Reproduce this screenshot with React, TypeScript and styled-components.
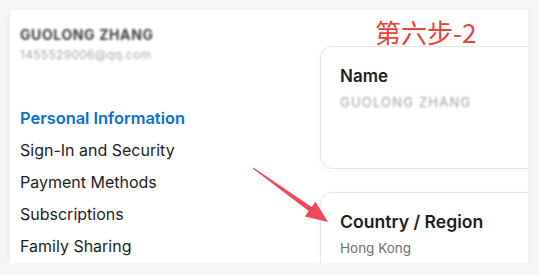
import styled, { createGlobalStyle } from "styled-components";

const GlobalStyle = createGlobalStyle`
  html, body {
    margin: 0;
    padding: 0;
    background: #f6f6f6;
    font-family: Inter, "Noto Sans", "Liberation Sans", sans-serif;
  }
  #root {
    padding: 10px 0 0 10px;
  }
`;

const Panel = styled.div`
  position: relative;
  width: 518px;
  height: 253px;
  background: #ffffff;
  box-shadow: 0 1px 8px rgba(0, 0, 0, 0.06);
  display: grid;
  grid-template-columns: 310px 1fr;
  overflow: hidden;
`;

const Sidebar = styled.aside`
  padding: 17px 0 0 10px;
  display: flex;
  flex-direction: column;
`;

const Profile = styled.div`
  display: flex;
  flex-direction: column;
  gap: 4px;
`;

const Blurred = styled.span<{ size: number; color: string; weight?: number; spacing?: number }>`
  font-size: ${(p) => p.size}px;
  font-weight: ${(p) => p.weight ?? 400};
  letter-spacing: ${(p) => p.spacing ?? 0}px;
  color: ${(p) => p.color};
  filter: blur(1.1px);
  line-height: 16px;
  white-space: nowrap;
`;

const Nav = styled.ul`
  list-style: none;
  margin: 39px 0 0;
  padding: 0;
`;

const NavItem = styled.li<{ active?: boolean }>`
  font-size: ${(p) => (p.active ? 16.4 : 16)}px;
  line-height: 32px;
  color: ${(p) => (p.active ? "#0a6fd0" : "#1d1d1f")};
  font-weight: ${(p) => (p.active ? 600 : 400)};
  white-space: nowrap;
`;

const Content = styled.main`
  padding-top: 36px;
  display: flex;
  flex-direction: column;
  gap: 23px;
`;

const Card = styled.section<{ height?: number }>`
  width: 260px;
  min-height: ${(p) => p.height ?? 123}px;
  box-sizing: border-box;
  border: 1px solid #e4e4e6;
  border-radius: 12px;
  padding: 18px 19px;
  box-shadow: 0 2px 8px rgba(0, 0, 0, 0.03);
  display: flex;
  flex-direction: column;
  gap: 7px;
`;

const CardTitle = styled.h3<{ size?: number }>`
  margin: 0;
  font-size: ${(p) => p.size ?? 17}px;
  line-height: 22px;
  font-weight: 600;
  color: #1d1d1f;
`;

const CardValue = styled.p`
  margin: 0;
  font-size: 13.5px;
  line-height: 16px;
  color: #6e6e73;
`;

const Annotation = styled.div`
  position: absolute;
  left: 365px;
  top: 4px;
  font-family: "Noto Sans CJK SC", "Noto Sans", sans-serif;
  font-size: 26px;
  line-height: 36px;
  color: #e8433d;
`;

const Arrow = styled.svg`
  position: absolute;
  left: 218px;
  top: 134px;
`;

export default function App() {
  return (
    <>
      <GlobalStyle />
      <Panel>
        <Sidebar>
          <Profile>
            <Blurred size={14} color="#3e3e4a" weight={700} spacing={0.6}>
              GUOLONG ZHANG
            </Blurred>
            <Blurred size={12} color="#a8a8b0" spacing={0.3}>
              1455529006@qq.com
            </Blurred>
          </Profile>
          <Nav>
            <NavItem active>Personal Information</NavItem>
            <NavItem>Sign-In and Security</NavItem>
            <NavItem>Payment Methods</NavItem>
            <NavItem>Subscriptions</NavItem>
            <NavItem>Family Sharing</NavItem>
          </Nav>
        </Sidebar>
        <Content>
          <Card>
            <CardTitle>Name</CardTitle>
            <CardValue>
              <Blurred size={13} color="#a0a0a8" spacing={1.2}>
                GUOLONG ZHANG
              </Blurred>
            </CardValue>
          </Card>
          <Card>
            <CardTitle size={17.6}>Country / Region</CardTitle>
            <CardValue>Hong Kong</CardValue>
          </Card>
        </Content>
        <Annotation>第六步-2</Annotation>
        <Arrow width="100" height="80" viewBox="0 0 100 80">
          <polygon
            points="24.7,24.4 25.3,23.6 83.7,63.1 87.5,57.8 100,78 76.9,72.4 80.7,67.1"
            fill="#f0475c"
          />
        </Arrow>
      </Panel>
    </>
  );
}
